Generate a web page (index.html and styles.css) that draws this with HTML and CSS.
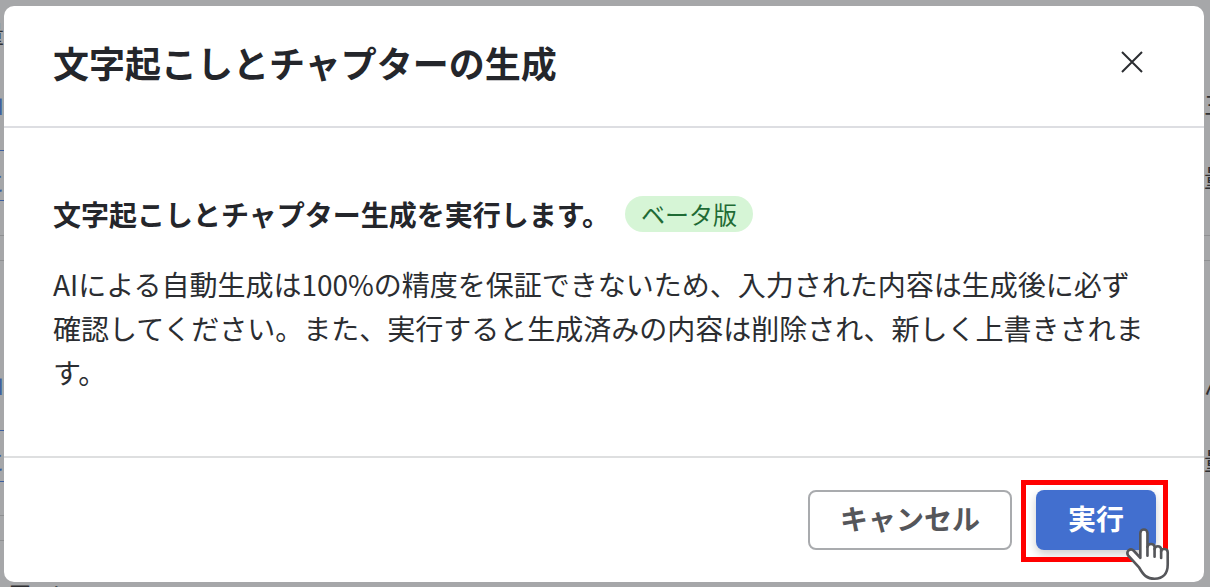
FILE: index.html
```html
<!DOCTYPE html>
<html lang="ja">
<head>
<meta charset="utf-8">
<title>文字起こしとチャプターの生成</title>
<link rel="stylesheet" href="styles.css">
</head>
<body>
<div class="page">
  <div class="behind" aria-hidden="true">
    <span class="rule blue rule-l1"></span>
    <span class="rule blue rule-l2"></span>
    <span class="rule grey rule-l3"></span>
    <span class="rule grey rule-l4"></span>
    <span class="rule blue rule-l5"></span>
    <span class="rule blue rule-l6"></span>
    <span class="rule grey rule-l7"></span>
    <span class="rule grey rule-l8"></span>
    <span class="rule grey rule-r1"></span>
    <span class="rule grey rule-r2"></span>
    <span class="frag frag-l1">量</span>
    <span class="frag link frag-l2">山</span>
    <span class="frag link frag-l3">に</span>
    <span class="frag link frag-l4">山</span>
    <span class="frag link frag-l5">に</span>
    <span class="frag frag-r1">三</span>
    <span class="frag frag-r2">量</span>
    <span class="frag frag-r3">ん</span>
    <span class="frag frag-r4">量</span>
    <span class="frag frag-b">国 ト&nbsp;&nbsp;&nbsp;ノ</span>
  </div>
  <section class="dialog">
    <header class="head">
      <h1 class="title">文字起こしとチャプターの生成</h1>
      <svg class="close" viewBox="0 0 24 24" width="24" height="24"><path d="M2 2 L22 22 M22 2 L2 22"/></svg>
    </header>
    <div class="content">
      <div class="lead">
        <h2 class="subtitle">文字起こしとチャプター生成を実行します。</h2>
        <span class="badge">ベータ版</span>
      </div>
      <p class="text">AIによる自動生成は100%の精度を保証できないため、入力された内容は生成後に必ず確認してください。また、実行すると生成済みの内容は削除され、新しく上書きされます。</p>
    </div>
    <footer class="foot">
      <button class="btn cancel">キャンセル</button>
      <div class="run-wrap">
        <button class="btn run">実行</button>
        <span class="mark"></span>
        <svg class="hand" viewBox="0 0 42 50" width="46" height="55">
          <path d="M14 29 L14 6.5 C14 2 20.5 2 20.5 6.5 L20.5 19 C21 15.5 26.5 15.5 27 19 L27 21 C27.5 17.5 32.5 17.5 33 21 L33 23 C33.5 20 39 20 39 24 L39 35 C39 43 35 48 27 48 C20 48 17 45 13 38 L3 27 C0.5 23 5 19.5 8 22.5 Z"/>
          <path class="line" d="M20.5 19 L20.5 27 M27 21 L27 28 M33 23 L33 29"/>
        </svg>
      </div>
    </footer>
  </section>
</div>
</body>
</html>
```
FILE: styles.css
```css
* { box-sizing: border-box; }
html, body { margin: 0; padding: 0; }
body {
  width: 1210px;
  height: 587px;
  overflow: hidden;
  font-family: "Noto Sans CJK JP", "Noto Sans", sans-serif;
  color: #24262b;
}
.page {
  position: relative;
  width: 1210px;
  height: 587px;
  padding: 6px 6px 5px 4px;
  background: #a6a7a9;
  overflow: hidden;
}
.behind { position: absolute; inset: 0; }
.rule { position: absolute; height: 1px; }
.rule.blue { background: #3d5f9f; left: 0; width: 4px; }
.rule.grey { background: #8f9092; }
.rule-l1 { top: 150px; }
.rule-l2 { top: 200px; }
.rule-l3 { top: 235px; left: 0; width: 4px; }
.rule-l4 { top: 260px; left: 0; width: 4px; }
.rule-l5 { top: 430px; }
.rule-l6 { top: 481px; }
.rule-l7 { top: 515px; left: 0; width: 4px; }
.rule-l8 { top: 540px; left: 0; width: 4px; }
.rule-r1 { top: 235px; left: 1204px; width: 6px; }
.rule-r2 { top: 260px; left: 1204px; width: 6px; }
.frag { position: absolute; font-size: 24px; line-height: 24px; color: #2f3033; }
.frag.link { color: #3d5f9f; }
.frag-l1 { top: 21px; left: -20px; }
.frag-l2 { top: 91px; left: -20px; }
.frag-l3 { top: 170px; left: -20px; }
.frag-l4 { top: 371px; left: -20px; }
.frag-l5 { top: 449px; left: -20px; }
.frag-r1 { top: 92px; left: 1204px; }
.frag-r2 { top: 165px; left: 1204px; }
.frag-r3 { top: 372px; left: 1204px; }
.frag-r4 { top: 448px; left: 1204px; }
.frag-b { top: 581px; left: 9px; font-size: 22px; letter-spacing: 6px; }
.dialog {
  position: relative;
  height: 576px;
  background: #fff;
  border-radius: 10px;
  display: flex;
  flex-direction: column;
}
.head {
  height: 122px;
  padding: 0 60px 9px 49px;
  border-bottom: 2px solid #dddee2;
  display: flex;
  align-items: center;
  justify-content: space-between;
}
.title { margin: 0; font-size: 36px; line-height: 50px; font-weight: 700; }
.close { fill: none; stroke: #2b2d31; stroke-width: 2; }
.content { flex: 1; padding: 68px 49px 0; }
.lead { display: flex; align-items: center; gap: 12px; height: 36px; }
.subtitle { margin: 0; font-size: 28px; line-height: 36px; font-weight: 700; }
.badge {
  height: 36px;
  margin-left: 3px;
  padding: 0 16px;
  border-radius: 18px;
  background: #d6f5d6;
  color: #1f6b35;
  font-size: 24px;
  line-height: 36px;
}
.text { margin: 30px 0 0; font-size: 28px; line-height: 44px; color: #2b2d31; }
.foot {
  height: 126px;
  border-top: 2px solid #dedfe0;
  padding: 32px 48px 0 0;
  display: flex;
  justify-content: flex-end;
  align-items: flex-start;
  gap: 24px;
}
.btn {
  height: 60px;
  border-radius: 8px;
  font-family: inherit;
  font-size: 28px;
  font-weight: 700;
  padding: 0 0 4px;
}
.cancel {
  width: 204px;
  background: #fff;
  border: 2px solid #a9abae;
  color: #55565a;
}
.run {
  display: block;
  width: 120px;
  background: #426fcf;
  border: 0;
  color: #fff;
  box-shadow: 0 4px 10px rgba(0, 0, 0, .2);
}
.run-wrap { position: relative; }
.mark {
  position: absolute;
  left: -15px;
  top: -10px;
  width: 147px;
  height: 82px;
  border: 5px solid #f00;
}
.hand {
  position: absolute;
  left: 89px;
  top: 36px;
  fill: #fff;
  stroke: #55565a;
  stroke-width: 2.4;
  stroke-linejoin: round;
}
.hand .line { fill: none; stroke-linecap: round; }
```
